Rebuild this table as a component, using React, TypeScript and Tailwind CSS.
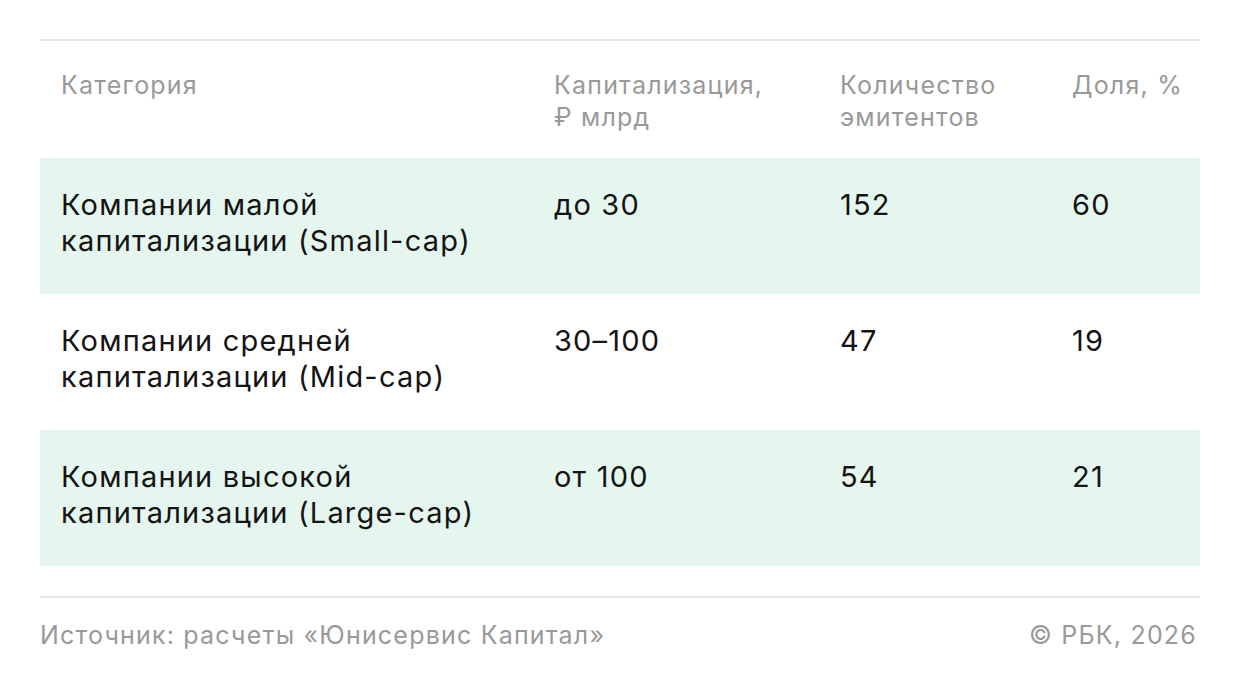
const rows = [
  { name: ['Компании малой', 'капитализации (Small-cap)'], cap: 'до 30', count: '152', share: '60', green: true },
  { name: ['Компании средней', 'капитализации (Mid-cap)'], cap: '30–100', count: '47', share: '19', green: false },
  { name: ['Компании высокой', 'капитализации (Large-cap)'], cap: 'от 100', count: '54', share: '21', green: true },
];

export default function App() {
  return (
    <main className="min-h-screen bg-white px-10 pt-[39px] font-['Inter',_'Liberation_Sans',_sans-serif] tracking-[1.2px]">
      {/* TABLE */}
      <div className="border-t-2 border-[#e6e6e6]">
        <div className="grid grid-cols-[493px_286px_232px_1fr] pl-[21px] pt-[28px] pb-[25px] text-[25px] leading-[32px] text-[#999999]">
          <div>Категория</div>
          <div>
            Капитализация,
            <br />₽ млрд
          </div>
          <div>
            Количество
            <br />
            эмитентов
          </div>
          <div>Доля, %</div>
        </div>

        {rows.map((r) => (
          <div
            key={r.cap}
            className={`grid grid-cols-[493px_286px_232px_1fr] pl-[21px] pt-[29px] pb-[35px] text-[29px] leading-[36px] text-[#141414] ${r.green ? 'bg-[#e5f6ee]' : 'bg-white'}`}
          >
            <div>
              {r.name[0]}
              <br />
              {r.name[1]}
            </div>
            <div>{r.cap}</div>
            <div>{r.count}</div>
            <div>{r.share}</div>
          </div>
        ))}
      </div>

      {/* SOURCE */}
      <div className="mt-[30px] flex justify-between border-t-2 border-[#e6e6e6] pt-[21px] pr-[3px] text-[25px] leading-[32px] text-[#999999]">
        <span>Источник: расчеты «Юнисервис Капитал»</span>
        <span>© РБК, 2026</span>
      </div>
    </main>
  );
}
